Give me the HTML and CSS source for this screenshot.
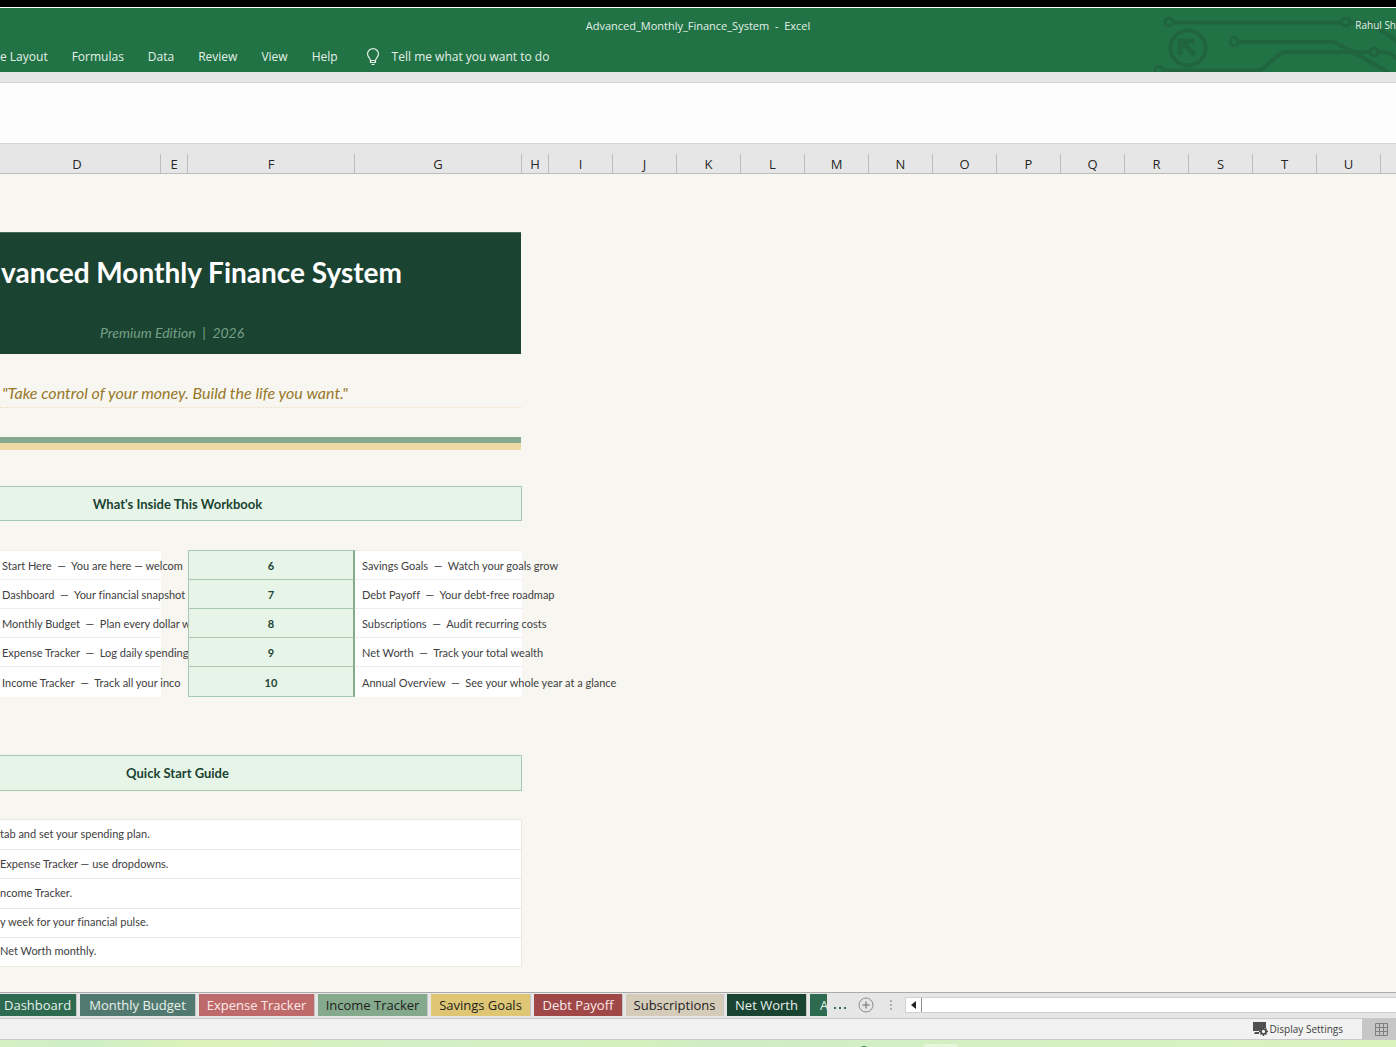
FILE: index.html
```html
<!DOCTYPE html>
<html lang="en">
<head>
<meta charset="utf-8">
<title>Advanced_Monthly_Finance_System - Excel</title>
<link rel="stylesheet" href="styles.css">
</head>
<body>
<header class="app-header">
  <svg class="circuit" width="246" height="64" viewBox="1150 8 246 64" fill="none" stroke="#21653f" stroke-width="4" aria-hidden="true">
    <circle cx="1169" cy="22" r="4" stroke-width="3"/>
    <path d="M1173 22.500H1342M1350 22.500H1370Q1376 23 1381 30L1398 42"/>
    <circle cx="1346" cy="22" r="4" stroke-width="3"/>
    <circle cx="1188" cy="48" r="17.500"/>
    <path d="M1195 41H1180V55M1181 41L1195 55" stroke-width="5"/>
    <circle cx="1234" cy="41.500" r="4" stroke-width="3"/>
    <path d="M1238 42H1332Q1336 42 1340 45L1390 73"/>
    <circle cx="1159" cy="70.500" r="4" stroke-width="3"/>
    <path d="M1163 70.500H1260L1279 55Q1282 52 1286 52H1370M1378 52H1384Q1390 52 1398 60"/>
    <circle cx="1374" cy="52" r="4" stroke-width="3"/>
  </svg>
  <div class="title-row">
    <h1 class="doc-title">Advanced_Monthly_Finance_System&nbsp; -&nbsp; Excel</h1>
    <span class="user">Rahul Sh</span>
  </div>
  <nav class="ribbon">
    <button>e Layout</button>
    <button>Formulas</button>
    <button>Data</button>
    <button>Review</button>
    <button>View</button>
    <button>Help</button>
    <button class="tell-me">
      <svg width="14" height="18" viewBox="0 0 14 18" fill="none" stroke="#e4f0e8" stroke-width="1.200" aria-hidden="true">
        <path d="M4.500 12.500C4.500 10.500 1.500 9 1.500 6A5.500 5.300 0 0 1 12.500 6C12.500 9 9.500 10.500 9.500 12.500ZM4.500 12.500V14.500H9.500V12.500M5.500 16.500H8.500"/>
      </svg>
      Tell me what you want to do
    </button>
  </nav>
</header>
<div class="formula-bar"><input class="formula" type="text" aria-label="Formula bar"></div>
<div class="columns">
  <span class="col-d">D</span><span>E</span><span>F</span><span>G</span><span>H</span><span>I</span><span>J</span><span>K</span><span>L</span><span>M</span><span>N</span><span>O</span><span>P</span><span>Q</span><span>R</span><span>S</span><span>T</span><span>U</span><span></span>
</div>
<main class="sheet">
  <div class="content">
    <section class="banner">
      <h2>vanced Monthly Finance System</h2>
      <p>Premium Edition&nbsp; |&nbsp; 2026</p>
    </section>
    <p class="quote">"Take control of your money. Build the life you want."</p>
    <div class="stripes"></div>
    <h3 class="section-title">What's Inside This Workbook</h3>
    <table class="inside">
      <colgroup><col class="w-d"><col class="w-e"><col class="w-f"><col class="w-g"></colgroup>
      <tr><td class="text">Start Here  —  You are here — welcom</td><td></td><td class="num">6</td><td class="text">Savings Goals  —  Watch your goals grow</td></tr>
      <tr><td class="text">Dashboard  —  Your financial snapshot</td><td></td><td class="num">7</td><td class="text">Debt Payoff  —  Your debt-free roadmap</td></tr>
      <tr><td class="text">Monthly Budget  —  Plan every dollar w</td><td></td><td class="num">8</td><td class="text">Subscriptions  —  Audit recurring costs</td></tr>
      <tr><td class="text">Expense Tracker  —  Log daily spending</td><td></td><td class="num">9</td><td class="text">Net Worth  —  Track your total wealth</td></tr>
      <tr><td class="text">Income Tracker  —  Track all your inco</td><td></td><td class="num">10</td><td class="text">Annual Overview  —  See your whole year at a glance</td></tr>
    </table>
    <h3 class="section-title guide-title">Quick Start Guide</h3>
    <ul class="guide">
      <li>tab and set your spending plan.</li>
      <li>Expense Tracker — use dropdowns.</li>
      <li>ncome Tracker.</li>
      <li>y week for your financial pulse.</li>
      <li>Net Worth monthly.</li>
    </ul>
  </div>
</main>
<div class="tab-bar">
  <nav class="tabs">
    <button class="forest first">Dashboard</button>
    <button class="teal">Monthly Budget</button>
    <button class="rose">Expense Tracker</button>
    <button class="sage">Income Tracker</button>
    <button class="gold">Savings Goals</button>
    <button class="brick">Debt Payoff</button>
    <button class="sand">Subscriptions</button>
    <button class="pine">Net Worth</button>
    <button class="forest cut">A</button>
  </nav>
  <button class="more" aria-label="More sheets"><svg width="12" height="4" viewBox="0 0 12 4" fill="#217346"><path d="M0 1h2v2H0zM5 1h2v2H5zM10 1h2v2h-2z"/></svg></button>
  <button class="add" aria-label="New sheet"><svg width="16" height="16" viewBox="0 0 16 16" fill="none" stroke="#8c8c8c"><circle cx="8" cy="8" r="7"/><path d="M8 4.500V11.500M4.500 8H11.500" stroke-width="1.500"/></svg></button>
  <svg class="grip" width="3" height="12" viewBox="0 0 3 12" fill="#b0b0b0" aria-hidden="true"><path d="M0 1h2v2H0zM0 5h2v2H0zM0 9h2v2H0z"/></svg>
  <div class="scroll">
    <button aria-label="Scroll left"><svg width="5" height="8" viewBox="0 0 5 8"><path d="M5 0V8L0 4Z" fill="#222"/></svg></button>
    <div class="track"></div>
  </div>
</div>
<footer class="status">
  <button class="display">
    <svg width="16" height="14" viewBox="0 0 16 14" aria-hidden="true"><path d="M1 0H14V6H11L7 9H1ZM3 10H7V12H2Z" fill="#505050"/><circle cx="11.500" cy="9.500" r="2.500" fill="none" stroke="#444" stroke-width="1.600"/><path d="M11.500 5V7M11.500 12V14M7 9.500H9M14 9.500H16M8.500 6.500L9.500 7.500M14.500 6.500L13.500 7.500M8.500 12.500L9.500 11.500M14.500 12.500L13.500 11.500" stroke="#444" stroke-width="1.400"/></svg>
    Display Settings
  </button>
  <button class="normal-view" aria-label="Normal view"><svg width="13" height="13" viewBox="0 0 13 13" fill="none" stroke="#808080"><path d="M.5.500H12.500V12.500H.5ZM.5 4.500H12.500M.5 8.500H12.500M4.500.500V12.500M8.500.500V12.500"/></svg></button>
</footer>
<div class="taskbar"><span class="app-icon"></span><span class="app-slot"></span></div>
</body>
</html>
```
FILE: styles.css
```css
* { box-sizing: border-box; }
html { background: #d5f0c3; }
body {
  margin: 0;
  min-height: 100vh;
  display: flex;
  flex-direction: column;
  overflow: hidden;
  font-family: "Open Sans", "Noto Sans", sans-serif;
  font-size: 12px;
  color: #262626;
}
h1, h2, h3, p, ul { margin: 0; padding: 0; font-weight: 400; }
button {
  border: 0;
  padding: 0;
  background: none;
  color: inherit;
  font: inherit;
  white-space: nowrap;
}
svg { display: block; flex: none; }

.app-header {
  position: relative;
  border-top: 7px solid #000;
  background: #217346;
  box-shadow: inset 0 1px #fff;
  color: #e4f0e8;
  overflow: hidden;
}
.circuit { position: absolute; right: 0; top: 1px; }
.title-row {
  position: relative;
  display: grid;
  grid-template-columns: 1fr auto 1fr;
  align-items: center;
  height: 36px;
}
.doc-title { grid-column: 2; font-size: 11px; }
.user { justify-self: end; font-size: 10px; }
.ribbon { position: relative; display: flex; align-items: center; gap: 24px; height: 29px; padding-bottom: 2px; }
.tell-me { display: flex; align-items: center; gap: 12px; margin-left: 4px; }

.formula-bar { padding-top: 10px; background: #e6e6e6; }
.formula {
  display: block;
  width: 100%;
  height: 62px;
  border: solid #d4d4d4;
  border-width: 1px 0;
  background: #fdfdfd;
}
.columns {
  display: grid;
  grid-template-columns: 161px 27px 167px 167px 27px repeat(13, 64px) 64px;
  height: 30px;
  padding-top: 10px;
  background: #e6e6e6;
  border-bottom: 1px solid #bdbdbd;
  font-size: 13px;
  line-height: 21px;
  text-align: center;
}
.columns span { height: 19px; border-right: 1px solid #bdbdbd; }
.columns .col-d { padding-right: 6px; }

.sheet {
  flex: 1;
  padding: 58px 0 20px;
  background: #f7f6f0;
  font-family: Lato, sans-serif;
  font-variant-ligatures: none;
}
.content { width: 522px; }
.banner {
  width: 521px;
  height: 122px;
  background: #1b4332;
  border-top: 1px solid #4a6b5c;
}
.banner h2 {
  padding: 20px 0 0 1px;
  color: #fff;
  font-size: 28px;
  line-height: 38px;
  font-weight: 700;
  white-space: nowrap;
}
.banner p {
  padding: 32px 0 0 100px;
  color: #74a184;
  font-size: 14px;
  line-height: 20px;
  font-style: italic;
}
.quote {
  height: 54px;
  padding: 29px 0 0 2px;
  border-bottom: 1px dotted #efdfc0;
  color: #97772a;
  font-size: 16px;
  line-height: 20px;
  font-style: italic;
}
.stripes {
  width: 521px;
  height: 13px;
  margin: 29px 0 36px;
  border-top: 6px solid #84a98c;
  background: #efd9a4;
}
.section-title {
  height: 35px;
  padding-right: 166px;
  border: 1px solid #a9c8b2;
  border-left: 0;
  background: #e7f5e8;
  color: #1b4332;
  font-size: 13px;
  line-height: 34px;
  font-weight: 700;
  text-align: center;
}
.inside {
  width: 522px;
  height: 147px;
  margin: 29px 0 58px;
  table-layout: fixed;
  border-spacing: 0;
  color: #404040;
  font-size: 11px;
}
.w-d { width: 161px; }
.w-e { width: 27px; }
.w-f, .w-g { width: 167px; }
.inside td { padding: 1px 0 0; white-space: pre; }
.inside .text { padding-left: 2px; background: #fff; border-top: 1px solid #efede5; }
.inside .num + .text { padding-left: 7px; }
.inside .num {
  position: relative;
  background: #e7f5e8;
  border: 1px solid #a9c8b2;
  border-width: 1px 2px 0 1px;
  border-right-color: #84a98c;
  color: #1b4332;
  font-weight: 700;
  text-align: center;
}
.inside tr:last-child .num { border-bottom-width: 1px; }
.guide-title { height: 36px; }
.guide {
  display: grid;
  grid-template-rows: repeat(5, 1fr);
  height: 148px;
  margin-top: 28px;
  border: 1px solid #eae8e0;
  border-left: 0;
  background: #fff;
  color: #404040;
  font-size: 11px;
  list-style: none;
}
.guide li { display: flex; align-items: center; padding-bottom: 2px; }
.guide li + li { border-top: 1px solid #eae8e0; }

.tab-bar {
  display: flex;
  align-items: center;
  height: 26px;
  padding-bottom: 1px;
  border-top: 1px solid #ababab;
  background: #e6e6e6;
}
.tabs {
  display: grid;
  grid-template-columns: 77px 116px 116px 110px 100px 89px 98px 80px 17px;
  gap: 3px;
  font-size: 13px;
}
.tabs button { height: 22px; border-right: 1px solid #c6c6c6; overflow: hidden; color: #1e1e1e; }
.tabs .forest { background: #2d6a4f; color: #e6f1eb; }
.tabs .teal { background: #52796f; color: #e6f1eb; }
.tabs .rose { background: #bf6a6a; color: #fbe9e9; }
.tabs .sage { background: #84a98c; }
.tabs .gold { background: #dfc674; }
.tabs .brick { background: #a04848; color: #fbe9e9; }
.tabs .sand { background: #d5cbb9; }
.tabs .pine { background: #1b4332; color: #e6f1eb; }
.tabs .first { padding-left: 4px; text-align: left; }
.tabs .cut { padding-left: 10px; text-align: left; border: 0; }
.more { margin: 6px 12px 0 7px; }
.grip { margin: 0 12px 0 16px; }
.scroll { display: flex; flex: 1; height: 16px; border: 1px solid #d0d0d0; border-right: 0; background: #fff; }
.scroll button { display: flex; align-items: center; justify-content: center; width: 16px; border-right: 1px solid #8c8c8c; }
.track { flex: 1; }

.status {
  display: flex;
  justify-content: flex-end;
  gap: 19px;
  height: 22px;
  border: solid #c8c8c8;
  border-width: 1px 0;
  background: #f2f2f2;
  font-size: 10px;
  color: #404040;
}
.display { display: flex; align-items: center; gap: 2px; }
.normal-view { display: flex; align-items: center; justify-content: flex-end; width: 34px; padding-right: 8px; background: #c6c6c6; }
.taskbar {
  display: flex;
  align-items: flex-start;
  height: 7px;
  padding-left: 858px;
  background: linear-gradient(90deg, #d5f0c3, #cdeec6 6%, #dcf2b8 14%, #d3efc6 30%, #d5f0bb 45%, #cdecc6 52%, #d5f0c3 70%, #d9f2bd);
  overflow: hidden;
}
.app-icon { width: 12px; height: 7px; margin-top: 6px; border-radius: 6px 6px 0 0; background: #4e8a4c; }
.app-slot { width: 34px; height: 7px; margin: 4px 0 0 54px; border-radius: 3px 3px 0 0; background: #e5f6da; }
```
